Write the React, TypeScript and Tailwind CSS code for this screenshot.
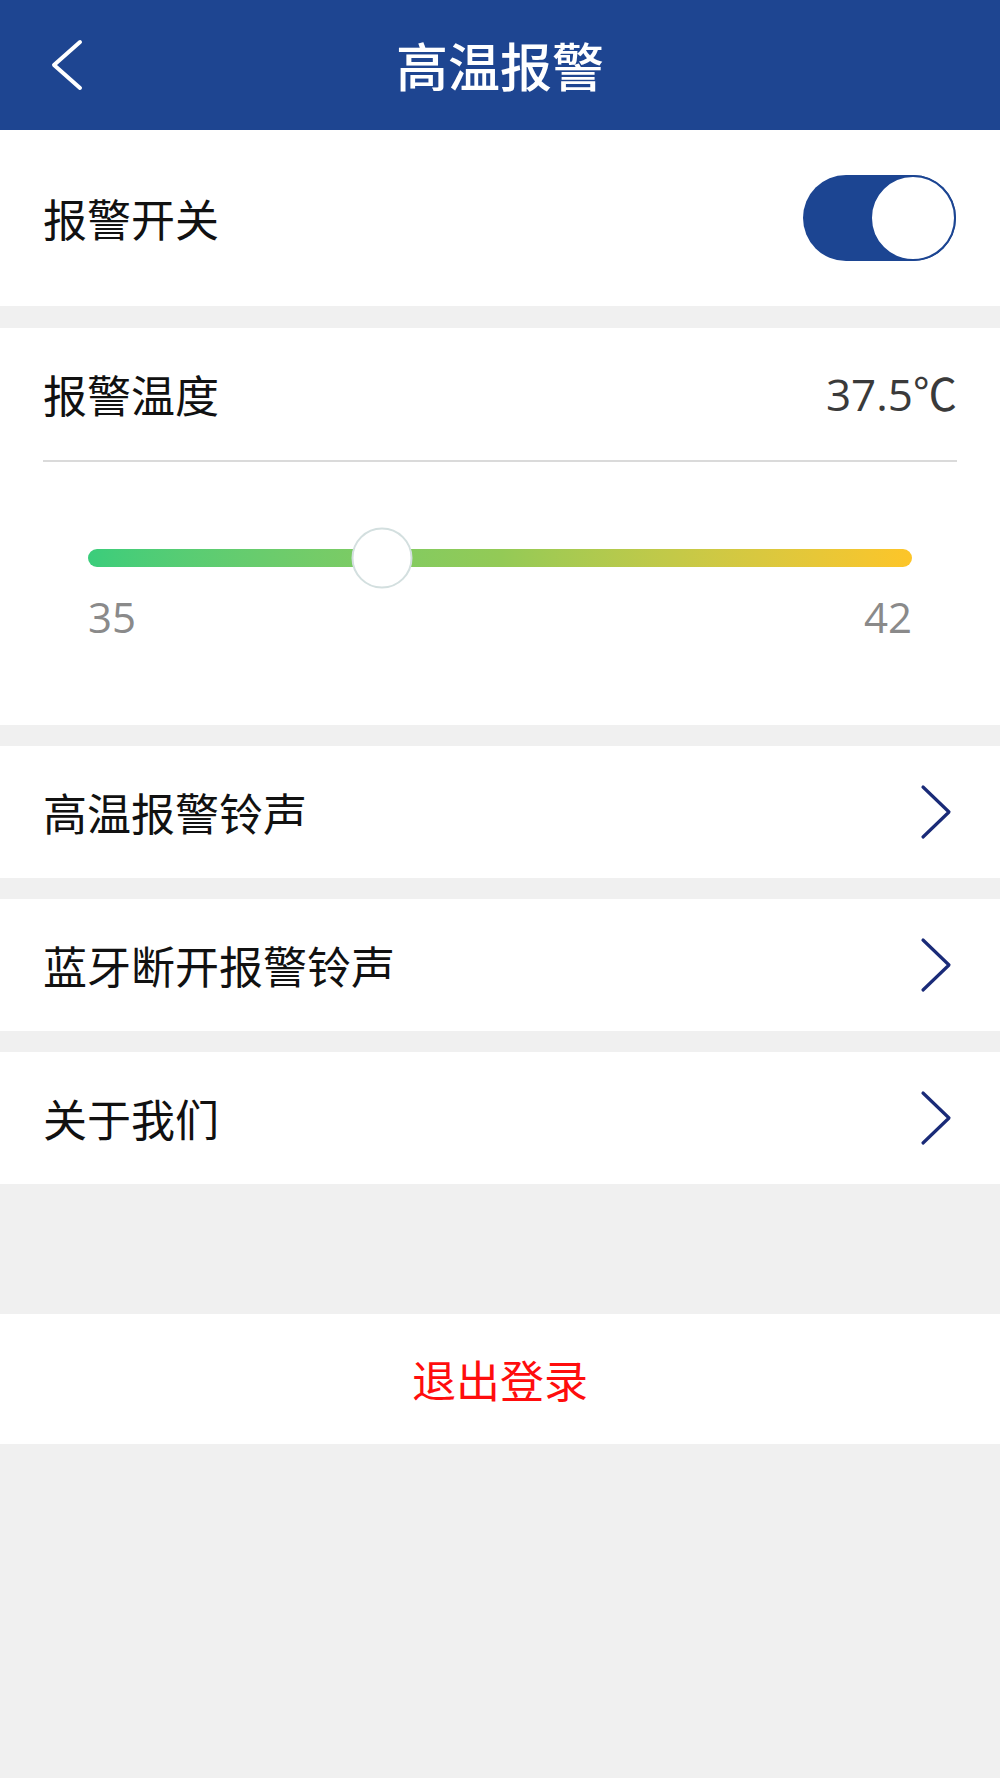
import React, { useState } from 'react'

const CJK = '"Noto Sans CJK SC", "Noto Sans", sans-serif'
const NUM = '"Open Sans", "Noto Sans CJK SC", sans-serif'

function Chevron() {
  return (
    <svg width="32" height="56" viewBox="0 0 32 56" fill="none">
      <polyline
        points="3,3 29,28 3,53"
        stroke="#1a2b78"
        strokeWidth="3.2"
        strokeLinecap="round"
        strokeLinejoin="round"
      />
    </svg>
  )
}

function MenuRow({ label }: { label: string }) {
  return (
    <div className="flex h-[132px] items-center justify-between bg-white pl-[43px] pr-[48px]">
      <span className="text-[44px] leading-none text-[#111]" style={{ fontFamily: CJK }}>
        {label}
      </span>
      <Chevron />
    </div>
  )
}

export default function App() {
  const [alarmOn, setAlarmOn] = useState(true)
  const min = 35
  const max = 42
  const temp = 37.5
  const pct = ((temp - min) / (max - min)) * 100

  return (
    <div className="min-h-[1778px] w-full bg-[#f0f0f0]" style={{ fontFamily: CJK }}>
      {/* header */}
      <div className="grid h-[130px] grid-cols-[1fr_auto_1fr] items-center bg-[#1e4591]">
        <div className="pl-[50px]">
          <svg width="34" height="52" viewBox="0 0 34 52" fill="none">
            <polyline
              points="30,3 4,26 30,49"
              stroke="white"
              strokeWidth="4"
              strokeLinecap="round"
              strokeLinejoin="round"
            />
          </svg>
        </div>
        <h1 className="text-[52px] font-medium leading-none text-white">高温报警</h1>
        <div />
      </div>

      {/* alarm switch */}
      <div className="flex h-[176px] items-center justify-between bg-white pl-[43px] pr-[44px]">
        <span className="text-[44px] leading-none text-[#111]">报警开关</span>
        <button
          onClick={() => setAlarmOn((v) => !v)}
          className={`flex h-[86px] w-[153px] rounded-full ${alarmOn ? 'justify-end bg-[#1c4592]' : 'justify-start bg-[#d8d8d8]'}`}
        >
          <span
            className={`h-[86px] w-[86px] rounded-full border-2 bg-white ${alarmOn ? 'border-[#1c4592]' : 'border-[#d8d8d8]'}`}
          />
        </button>
      </div>

      {/* alarm temperature */}
      <div className="mt-[22px] bg-white px-[43px]">
        <div className="flex h-[132px] items-center justify-between">
          <span className="text-[44px] leading-none text-[#111]">报警温度</span>
          <span className="text-[44px] leading-none text-[#3a3a3a]" style={{ fontFamily: NUM }}>
            {temp}℃
          </span>
        </div>
        <div className="h-[2px] bg-[#dadada]" />
        <div className="px-[45px] pb-[87px] pt-[87px]">
          <div className="relative h-[18px] rounded-full bg-gradient-to-r from-[#3acd7b] via-[#93ca56] to-[#fdc528]">
            <div
              className="absolute top-1/2 h-[61px] w-[61px] -translate-x-1/2 -translate-y-1/2 rounded-full border-2 border-[#d3dfdf] bg-white"
              style={{ left: `${pct}%` }}
            />
          </div>
          <div
            className="mt-[29px] flex justify-between text-[42px] leading-none text-[#8a8a8a]"
            style={{ fontFamily: NUM }}
          >
            <span>{min}</span>
            <span>{max}</span>
          </div>
        </div>
      </div>

      {/* menu rows */}
      <div className="mt-[21px] flex flex-col gap-[21px]">
        <MenuRow label="高温报警铃声" />
        <MenuRow label="蓝牙断开报警铃声" />
        <MenuRow label="关于我们" />
      </div>

      {/* logout */}
      <div className="mt-[130px] flex h-[130px] items-center justify-center bg-white">
        <span className="text-[44px] leading-none text-[#ff0d0d]">退出登录</span>
      </div>
    </div>
  )
}
